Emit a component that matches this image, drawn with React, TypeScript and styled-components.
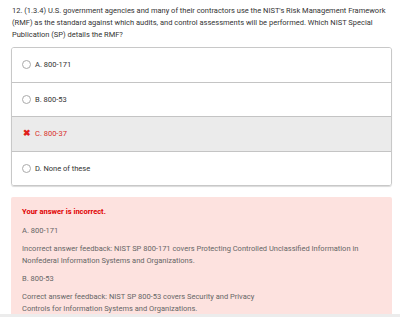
import styled, { createGlobalStyle } from "styled-components";

const GlobalStyle = createGlobalStyle`
body {
  margin: 0;
  background: #fff;
  font-family: Roboto, "Liberation Sans", sans-serif;
}
`

const options = [
  { label: "A. 800-171", wrong: false },
  { label: "B. 800-53", wrong: false },
  { label: "C. 800-37", wrong: true },
  { label: "D. None of these", wrong: false },
]

export default function App() {
  return (
    <Page>
      <GlobalStyle />
      <QuestionText>
        12. (1.3.4) U.S. government agencies and many of their contractors use the NIST's Risk Management Framework
        (RMF) as the standard against which audits, and control assessments will be performed. Which NIST Special
        Publication (SP) details the RMF?
      </QuestionText>

      <OptionList>
        {options.map(o => (
          <Option key={o.label} $selected={o.wrong}>
            {o.wrong ? <Cross>✖</Cross> : <Radio />}
            <OptionLabel $wrong={o.wrong}>{o.label}</OptionLabel>
          </Option>
        ))}
      </OptionList>

      <Feedback>
        <FeedbackTitle>Your answer is incorrect.</FeedbackTitle>
        <FeedbackText>A. 800-171</FeedbackText>
        <FeedbackText>
          Incorrect answer feedback: NIST SP 800-171 covers Protecting Controlled Unclassified Information in
          <br />Nonfederal Information Systems and Organizations.
        </FeedbackText>
        <FeedbackText>B. 800-53</FeedbackText>
        <FeedbackText>
          Correct answer feedback: NIST SP 800-53 covers Security and Privacy
          <br />Controls for Information Systems and Organizations.
        </FeedbackText>
      </Feedback>
      <BottomBar />
    </Page>
  )
}

const Page = styled.div`
padding: 5px 8px 0 11px;
width: 400px;
box-sizing: border-box;
`
const QuestionText = styled.p`
margin: 0 0 0 1px;
font-size: 7.5px;
line-height: 12px;
color: #333;
`
const OptionList = styled.ul`
list-style: none;
margin: 6px 0 0;
padding: 0;
border: 1px solid #c8c8c8;
border-radius: 3px;
box-shadow: 0 1px 1px rgba(0, 0, 0, 0.15);
overflow: hidden;
`
const Option = styled.li<{ $selected: boolean }>`
display: flex;
align-items: center;
gap: 4px;
height: 33.5px;
padding: 0 10px;
background: ${props => props.$selected ? "#ebebeb" : "#fff"};
border-bottom: 1px solid #c4c4c4;
&:last-child {
    border-bottom: none;
}
`
const Radio = styled.span`
width: 7px;
height: 7px;
border: 1px solid #aaa;
border-radius: 50%;
background: #fff;
`
const Cross = styled.span`
width: 9px;
font-size: 9px;
font-weight: 700;
line-height: 1;
color: #e0201b;
text-align: center;
`
const OptionLabel = styled.span<{ $wrong: boolean }>`
font-size: 7.5px;
color: ${props => props.$wrong ? "#d9302b" : "#333"};
`
const Feedback = styled.section`
margin-top: 11px;
padding: 9px 11px 6px;
background: #fde2df;
border-radius: 2px;
`
const FeedbackTitle = styled.h4`
margin: 0 0 7px;
font-size: 7.5px;
line-height: 12px;
font-weight: 700;
color: #e00000;
`
const FeedbackText = styled.p`
margin: 0 0 6px;
font-size: 7.5px;
line-height: 12px;
color: #666;
`
const BottomBar = styled.div`
position: fixed;
left: 0;
right: 0;
bottom: 0;
height: 3px;
background: #ececec;
`
